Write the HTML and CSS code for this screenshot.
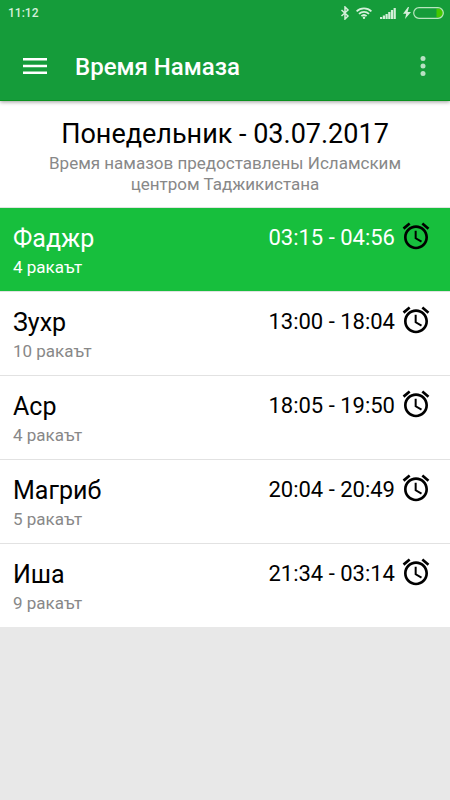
FILE: index.html
```html
<!DOCTYPE html>
<html lang="ru">
<head>
  <meta charset="UTF-8">
  <meta name="viewport" content="width=device-width, initial-scale=1">
  <title>Время Намаза</title>
  <link rel="stylesheet" href="styles.css">
</head>
<body>
  <svg class="sprite" width="0" height="0" aria-hidden="true">
    <symbol id="alarm" viewBox="0 0 24 24">
      <path d="M22 5.72l-4.6-3.86-1.29 1.53 4.6 3.86L22 5.72zM7.88 3.39L6.6 1.86 2 5.71l1.29 1.53 4.59-3.85zM12.5 8H11v6l4.75 2.85.75-1.23-4-2.37V8zM12 4c-4.97 0-9 4.03-9 9s4.02 9 9 9c4.97 0 9-4.03 9-9s-4.03-9-9-9zm0 16c-3.87 0-7-3.13-7-7s3.13-7 7-7 7 3.13 7 7-3.13 7-7 7z"/>
    </symbol>
  </svg>

  <header class="app-header">
    <div class="status-bar">
      <span>11:12</span>
      <div class="status-icons">
        <svg width="10" height="14" viewBox="0 0 10 14" fill="none" stroke="currentColor" stroke-width="1.5">
          <path d="M1.5 4l6.5 6-3 3V1l3 3-6.5 6"/>
        </svg>
        <svg class="wifi" width="16" height="12" viewBox="0 0 16 12" fill="none" stroke="currentColor" stroke-width="1.8">
          <path d="M.6 4.4a10.6 10.6 0 0 1 14.8 0M3 6.9a7.2 7.2 0 0 1 10 0M5.4 9.2a3.8 3.8 0 0 1 5.2 0"/>
          <circle cx="8" cy="10.7" r="1.2" fill="currentColor" stroke="none"/>
        </svg>
        <svg class="signal" width="16" height="12" viewBox="0 0 16 12" fill="currentColor">
          <path d="M0 10h2.200v2H0zM2.800 8.500H5V12H2.800zM5.500 7h2.200v5H5.500zM8.200 5h2.200v7H8.200zM10.900 3h2.200v9h-2.200zM13.600 1h2.200v11h-2.200z"/>
        </svg>
        <svg class="bolt" width="8" height="12" viewBox="0 0 8 12" fill="currentColor">
          <path d="M5 0L0 6.800h3.200L2 12l6-7H4.600L6 0z"/>
        </svg>
        <svg width="31" height="12" viewBox="0 0 31 12">
          <path d="M23.500 1.500H26a4.500 4.500 0 0 1 0 9h-2.500z" fill="#45c800"/>
          <rect x=".7" y=".7" width="29.600" height="10.600" rx="5.300" fill="none" stroke="#b9e6bf" stroke-width="1.200"/>
        </svg>
      </div>
    </div>
    <div class="toolbar">
      <button class="icon-button" aria-label="Меню">
        <svg width="24" height="16" viewBox="0 0 24 16" fill="#fff">
          <path d="M0 0h24v2.500H0zM0 6.750h24v2.500H0zM0 13.500h24V16H0z"/>
        </svg>
      </button>
      <h1>Время Намаза</h1>
      <button class="icon-button more" aria-label="Ещё">
        <svg width="6" height="20" viewBox="0 0 6 20" fill="#b9e1c4">
          <circle cx="3" cy="2.500" r="2.500"/>
          <circle cx="3" cy="10" r="2.500"/>
          <circle cx="3" cy="17.500" r="2.500"/>
        </svg>
      </button>
    </div>
  </header>

  <main>
    <section class="day">
      <h2>Понедельник - 03.07.2017</h2>
      <p>Время намазов предоставлены Исламским центром Таджикистана</p>
    </section>

    <ul class="prayers">
      <li class="prayer active">
        <div class="info">
          <h3>Фаджр</h3>
          <p>4 ракаът</p>
        </div>
        <span class="time">03:15 - 04:56</span>
        <button class="alarm" aria-label="Будильник: Фаджр"><svg width="32" height="32"><use href="#alarm"/></svg></button>
      </li>
      <li class="prayer">
        <div class="info">
          <h3>Зухр</h3>
          <p>10 ракаът</p>
        </div>
        <span class="time">13:00 - 18:04</span>
        <button class="alarm" aria-label="Будильник: Зухр"><svg width="32" height="32"><use href="#alarm"/></svg></button>
      </li>
      <li class="prayer">
        <div class="info">
          <h3>Аср</h3>
          <p>4 ракаът</p>
        </div>
        <span class="time">18:05 - 19:50</span>
        <button class="alarm" aria-label="Будильник: Аср"><svg width="32" height="32"><use href="#alarm"/></svg></button>
      </li>
      <li class="prayer">
        <div class="info">
          <h3>Магриб</h3>
          <p>5 ракаът</p>
        </div>
        <span class="time">20:04 - 20:49</span>
        <button class="alarm" aria-label="Будильник: Магриб"><svg width="32" height="32"><use href="#alarm"/></svg></button>
      </li>
      <li class="prayer">
        <div class="info">
          <h3>Иша</h3>
          <p>9 ракаът</p>
        </div>
        <span class="time">21:34 - 03:14</span>
        <button class="alarm" aria-label="Будильник: Иша"><svg width="32" height="32"><use href="#alarm"/></svg></button>
      </li>
    </ul>
  </main>
</body>
</html>
```

FILE: styles.css
```css
* {
  box-sizing: border-box;
}

body {
  margin: 0;
  font-family: Roboto, "Noto Sans", sans-serif;
  background: #e8e8e8;
  color: #000;
}

h1, h2, h3, p, ul {
  margin: 0;
  padding: 0;
  font-weight: 400;
}

button {
  display: flex;
  padding: 0;
  border: none;
  background: none;
  cursor: pointer;
}

.sprite {
  position: absolute;
}

.app-header {
  position: relative;
  background: #159c3a;
  color: #fff;
  border-bottom: 1px solid #0b9120;
  box-shadow: 0 1px 4px rgba(0, 0, 0, 0.4);
}

.status-bar {
  display: flex;
  align-items: center;
  justify-content: space-between;
  height: 26px;
  padding: 0 6px 0 8px;
  font-size: 12px;
  font-weight: 500;
  color: #d5f0da;
}

.status-icons {
  display: flex;
  align-items: center;
}

.wifi {
  margin-left: 6px;
}

.signal {
  margin-left: 8px;
}

.bolt {
  margin: 0 2px 0 7px;
}

.toolbar {
  display: flex;
  align-items: center;
  height: 74px;
  padding: 6px 24px 0 23px;
}

.toolbar h1 {
  flex: 1;
  margin-left: 28px;
  padding-top: 2px;
  font-size: 24px;
  font-weight: 500;
}

.day {
  padding: 15px 36px 12px;
  background: #fff;
  text-align: center;
}

.day h2 {
  font-size: 27px;
  line-height: 36px;
}

.day p {
  padding-top: 1px;
  font-size: 17px;
  line-height: 21px;
  color: #888;
}

.prayers {
  list-style: none;
}

.prayer {
  display: flex;
  align-items: flex-start;
  height: 84px;
  padding: 12px 18px 0 13px;
  border-top: 1px solid #e2e2e2;
  background: #fff;
}

.info {
  flex: 1;
  padding-top: 2px;
}

.info h3 {
  font-size: 25px;
  line-height: 34px;
}

.info p {
  font-size: 17px;
  line-height: 22px;
  color: #888;
}

.time {
  margin-right: 5px;
  font-size: 22px;
  line-height: 36px;
}

.active {
  background: #17bf3d;
  color: #fff;
}

.active .info p {
  color: #fff;
}
```
